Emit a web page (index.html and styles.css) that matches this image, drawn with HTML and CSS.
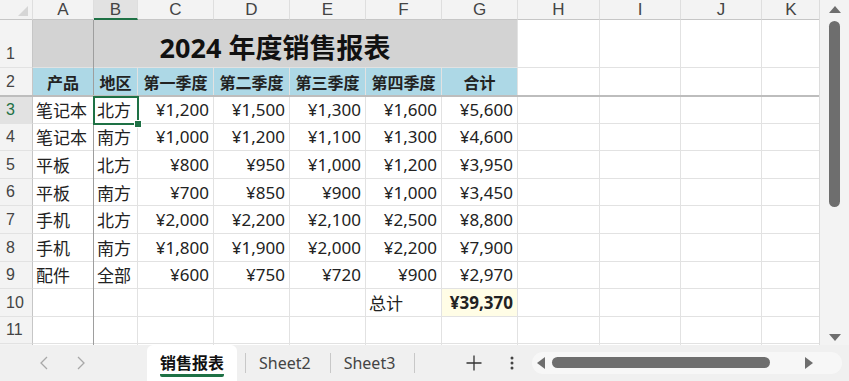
FILE: index.html
```html
<!DOCTYPE html>
<html lang="zh">
<head>
    <meta charset="utf-8">
    <title>2024 年度销售报表</title>
    <link rel="stylesheet" href="styles.css">
</head>
<body>

<div class="app">
    <div class="main">
        <div class="sheet">
            <div class="grid">
                <!-- column headers -->
                <div class="hd corner"><span class="tri"></span></div>
                <div class="hd">A</div>
                <div class="hd active">B</div>
                <div class="hd">C</div>
                <div class="hd">D</div>
                <div class="hd">E</div>
                <div class="hd">F</div>
                <div class="hd">G</div>
                <div class="hd">H</div>
                <div class="hd">I</div>
                <div class="hd">J</div>
                <div class="hd end">K</div>

                <!-- row 1 -->
                <div class="rh">1</div>
                <div class="c title">2024 年度销售报表</div>
                <div class="c"></div><div class="c"></div><div class="c"></div><div class="c end"></div>

                <!-- row 2 -->
                <div class="rh">2</div>
                <div class="c th">产品</div>
                <div class="c th">地区</div>
                <div class="c th">第一季度</div>
                <div class="c th">第二季度</div>
                <div class="c th">第三季度</div>
                <div class="c th">第四季度</div>
                <div class="c th">合计</div>
                <div class="c"></div><div class="c"></div><div class="c"></div><div class="c end"></div>

                <!-- row 3 -->
                <div class="rh sel">3</div>
                <div class="c">笔记本</div>
                <div class="c">北方</div>
                <div class="c num">¥1,200</div>
                <div class="c num">¥1,500</div>
                <div class="c num">¥1,300</div>
                <div class="c num">¥1,600</div>
                <div class="c num">¥5,600</div>
                <div class="c"></div><div class="c"></div><div class="c"></div><div class="c end"></div>

                <!-- row 4 -->
                <div class="rh">4</div>
                <div class="c">笔记本</div>
                <div class="c">南方</div>
                <div class="c num">¥1,000</div>
                <div class="c num">¥1,200</div>
                <div class="c num">¥1,100</div>
                <div class="c num">¥1,300</div>
                <div class="c num">¥4,600</div>
                <div class="c"></div><div class="c"></div><div class="c"></div><div class="c end"></div>

                <!-- row 5 -->
                <div class="rh">5</div>
                <div class="c">平板</div>
                <div class="c">北方</div>
                <div class="c num">¥800</div>
                <div class="c num">¥950</div>
                <div class="c num">¥1,000</div>
                <div class="c num">¥1,200</div>
                <div class="c num">¥3,950</div>
                <div class="c"></div><div class="c"></div><div class="c"></div><div class="c end"></div>

                <!-- row 6 -->
                <div class="rh">6</div>
                <div class="c">平板</div>
                <div class="c">南方</div>
                <div class="c num">¥700</div>
                <div class="c num">¥850</div>
                <div class="c num">¥900</div>
                <div class="c num">¥1,000</div>
                <div class="c num">¥3,450</div>
                <div class="c"></div><div class="c"></div><div class="c"></div><div class="c end"></div>

                <!-- row 7 -->
                <div class="rh">7</div>
                <div class="c">手机</div>
                <div class="c">北方</div>
                <div class="c num">¥2,000</div>
                <div class="c num">¥2,200</div>
                <div class="c num">¥2,100</div>
                <div class="c num">¥2,500</div>
                <div class="c num">¥8,800</div>
                <div class="c"></div><div class="c"></div><div class="c"></div><div class="c end"></div>

                <!-- row 8 -->
                <div class="rh">8</div>
                <div class="c">手机</div>
                <div class="c">南方</div>
                <div class="c num">¥1,800</div>
                <div class="c num">¥1,900</div>
                <div class="c num">¥2,000</div>
                <div class="c num">¥2,200</div>
                <div class="c num">¥7,900</div>
                <div class="c"></div><div class="c"></div><div class="c"></div><div class="c end"></div>

                <!-- row 9 -->
                <div class="rh">9</div>
                <div class="c">配件</div>
                <div class="c">全部</div>
                <div class="c num">¥600</div>
                <div class="c num">¥750</div>
                <div class="c num">¥720</div>
                <div class="c num">¥900</div>
                <div class="c num">¥2,970</div>
                <div class="c"></div><div class="c"></div><div class="c"></div><div class="c end"></div>

                <!-- row 10 -->
                <div class="rh">10</div>
                <div class="c"></div>
                <div class="c"></div>
                <div class="c"></div>
                <div class="c"></div>
                <div class="c"></div>
                <div class="c">总计</div>
                <div class="c num sum">¥39,370</div>
                <div class="c"></div><div class="c"></div><div class="c"></div><div class="c end"></div>

                <!-- row 11 -->
                <div class="rh">11</div>
                <div class="c"></div><div class="c"></div><div class="c"></div><div class="c"></div>
                <div class="c"></div><div class="c"></div><div class="c"></div><div class="c"></div>
                <div class="c"></div><div class="c"></div><div class="c end"></div>

                <!-- row 12, only its top edge shows -->
                <div class="rh"></div>
                <div class="c"></div><div class="c"></div><div class="c"></div><div class="c"></div>
                <div class="c"></div><div class="c"></div><div class="c"></div><div class="c"></div>
                <div class="c"></div><div class="c"></div><div class="c end"></div>
            </div>

            <div class="freeze-col"></div>
            <div class="freeze-row"></div>
            <div class="selection"><span class="handle"></span></div>
        </div>

        <div class="vscroll">
            <span class="arrow up"></span>
            <span class="vthumb"></span>
            <span class="arrow down"></span>
        </div>
    </div>

    <div class="tabbar">
        <div class="nav">
            <svg width="8" height="14" viewBox="0 0 8 14"><path d="M7 1 L1 7 L7 13" fill="none" stroke="#a8a8a8" stroke-width="1.3"/></svg>
            <svg width="8" height="14" viewBox="0 0 8 14"><path d="M1 1 L7 7 L1 13" fill="none" stroke="#a8a8a8" stroke-width="1.3"/></svg>
        </div>
        <div class="tab current"><span>销售报表</span></div>
        <span class="sep"></span>
        <div class="tab">Sheet2</div>
        <span class="sep"></span>
        <div class="tab">Sheet3</div>
        <span class="sep"></span>
        <div class="tool plus">
            <svg width="16" height="16" viewBox="0 0 16 16"><path d="M8 0.5 V15.5 M0.5 8 H15.5" stroke="#333" stroke-width="1.3"/></svg>
        </div>
        <div class="tool more">
            <svg width="4" height="14" viewBox="0 0 4 14"><circle cx="2" cy="2" r="1.5" fill="#444"/><circle cx="2" cy="7" r="1.5" fill="#444"/><circle cx="2" cy="12" r="1.5" fill="#444"/></svg>
        </div>
        <div class="hscroll">
            <span class="arrow left"></span>
            <span class="hthumb"></span>
            <span class="arrow right"></span>
        </div>
    </div>
</div>

</body>
</html>
```

FILE: styles.css
```css
body {
    margin: 0;
    font-family: "Noto Sans", "Noto Sans CJK SC", sans-serif;
    color: #222;
}

.app {
    width: 849px;
    height: 381px;
    display: flex;
    flex-direction: column;
    overflow: hidden;
    background: #f0f0f0;
}

.main {
    display: flex;
    height: 345px;
}

.sheet {
    position: relative;
    width: 820px;
    height: 345px;
    overflow: hidden;
    background: #fff;
    border-right: 1px solid #dcdcdc;
    box-sizing: border-box;
}

.grid {
    display: grid;
    grid-template-columns: 33px 61px 44px 76px 76px 76px 76px 76px 82px 81px 81px 58px;
    grid-template-rows: 20px 48px 28px repeat(10, 27.6px);
}

.grid > div {
    box-sizing: border-box;
    border-right: 1px solid #e2e2e2;
    border-bottom: 1px solid #e2e2e2;
    white-space: nowrap;
    overflow: hidden;
}

/* headers */
.hd {
    background: #f3f3f3;
    color: #444;
    font-family: "Liberation Sans", Arial, sans-serif;
    font-size: 17px;
    text-align: center;
    line-height: 19px;
    border-bottom-color: #c6c6c6 !important;
    border-right-color: #dedede !important;
}

.hd.active {
    background: #e2e2e2;
    border-bottom: 2px solid #1e7145 !important;
}

.corner {
    position: relative;
}

.tri {
    position: absolute;
    right: 4px;
    bottom: 3px;
    width: 0;
    height: 0;
    border-left: 10px solid transparent;
    border-bottom: 10px solid #d6d6d6;
}

.rh {
    background: #f3f3f3;
    color: #444;
    font-family: "Liberation Sans", Arial, sans-serif;
    font-size: 16px;
    display: flex;
    align-items: flex-end;
    padding: 0 0 4px 6px;
    border-right-color: #c6c6c6 !important;
    border-bottom-color: #e2e2e2 !important;
}

.rh.sel {
    color: #1e7145;
    background: #e2e2e2;
}

.grid > .end {
    border-right: none;
}

/* cells */
.c {
    font-size: 17px;
    padding: 0 3px;
    display: flex;
    align-items: center;
}

.num {
    justify-content: flex-end;
    padding-right: 4px;
}

.title {
    grid-column: span 7;
    background: #d3d3d3;
    font-size: 27px;
    font-weight: bold;
    justify-content: center;
    padding-top: 5px;
    color: #111;
}

.th {
    background: #add8e6;
    font-weight: bold;
    justify-content: center;
    font-size: 16px;
}

.sum {
    background: #fffde6;
    font-weight: bold;
}

/* overlays */
.freeze-col {
    position: absolute;
    left: 93px;
    top: 20px;
    bottom: 0;
    width: 1px;
    background: #9e9e9e;
}

.freeze-row {
    position: absolute;
    left: 0;
    right: 0;
    top: 95px;
    height: 2px;
    background: #bdbdbd;
}

.selection {
    position: absolute;
    left: 93px;
    top: 96px;
    width: 46px;
    height: 29px;
    border: 2px solid #1e7145;
    box-sizing: border-box;
}

.handle {
    position: absolute;
    right: -5px;
    bottom: -5px;
    width: 6px;
    height: 6px;
    background: #1e7145;
    border: 1px solid #fff;
}

/* vertical scrollbar */
.vscroll {
    position: relative;
    width: 29px;
    background: #f3f3f3;
}

.vthumb {
    position: absolute;
    left: 9px;
    top: 21px;
    width: 11px;
    height: 186px;
    border-radius: 6px;
    background: #6e6e6e;
}

.arrow {
    position: absolute;
    width: 0;
    height: 0;
}

.arrow.up {
    left: 9px;
    top: 6px;
    border-left: 6px solid transparent;
    border-right: 6px solid transparent;
    border-bottom: 7px solid #6e6e6e;
}

.arrow.down {
    left: 9px;
    top: 334px;
    border-left: 6px solid transparent;
    border-right: 6px solid transparent;
    border-top: 7px solid #6e6e6e;
}

/* sheet tabs */
.tabbar {
    flex: 1;
    display: flex;
    align-items: center;
    font-size: 16px;
    color: #444;
}

.nav {
    width: 147px;
    display: flex;
    align-items: center;
    gap: 29px;
    padding-left: 40px;
    box-sizing: border-box;
}

.tab {
    height: 36px;
    display: flex;
    align-items: center;
    padding: 0 19px 0 13px;
}

.tab.current {
    background: #fff;
    border-radius: 6px 6px 0 0;
    padding: 0;
    width: 90px;
    margin-right: 8px;
    font-weight: bold;
    color: #111;
    justify-content: center;
}

.tab.current span {
    border-bottom: 3px solid #1e7145;
    border-radius: 2px;
    line-height: 22px;
    padding-top: 2px;
}

.sep {
    width: 1px;
    height: 20px;
    background: #c8c8c8;
}

.tool {
    display: flex;
    justify-content: center;
}

.plus {
    margin-left: 51px;
    width: 16px;
}

.more {
    margin-left: 27px;
    width: 6px;
}

.hscroll {
    position: relative;
    margin-left: 17px;
    width: 310px;
    height: 22px;
    border-radius: 11px;
    background: #f7f7f7;
}

.hthumb {
    position: absolute;
    left: 20px;
    top: 5px;
    width: 218px;
    height: 11px;
    border-radius: 6px;
    background: #6e6e6e;
}

.arrow.left {
    left: 5px;
    top: 5px;
    border-top: 6px solid transparent;
    border-bottom: 6px solid transparent;
    border-right: 8px solid #6e6e6e;
}

.arrow.right {
    left: 273px;
    top: 5px;
    border-top: 6px solid transparent;
    border-bottom: 6px solid transparent;
    border-left: 8px solid #6e6e6e;
}
```
